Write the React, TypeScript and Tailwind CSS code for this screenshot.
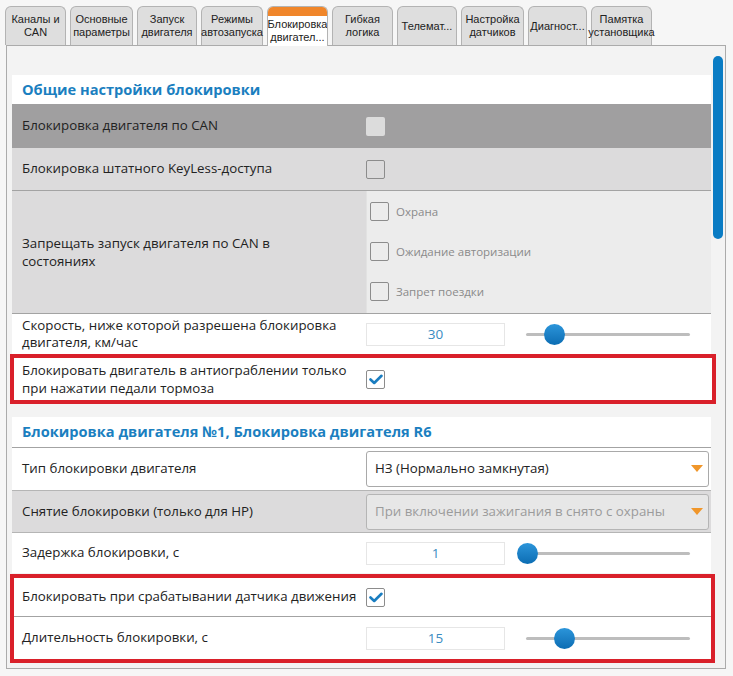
import React from "react";

const tabs: { label: string[]; w: number; active?: boolean }[] = [
  { label: ["Каналы и", "CAN"], w: 61 },
  { label: ["Основные", "параметры"], w: 63 },
  { label: ["Запуск", "двигателя"], w: 60 },
  { label: ["Режимы", "автозапуска"], w: 62 },
  { label: ["Блокировка", "двигател..."], w: 61, active: true },
  { label: ["Гибкая", "логика"], w: 61 },
  { label: ["Телемат..."], w: 60 },
  { label: ["Настройка", "датчиков"], w: 63 },
  { label: ["Диагност..."], w: 59 },
  { label: ["Памятка", "установщика"], w: 61 },
];

function Check({ checked, filled }: { checked?: boolean; filled?: boolean }) {
  if (filled) {
    return <div className="w-[19px] h-[19px] rounded-[2px] bg-[#dcdcdc]" />;
  }
  return (
    <div className="w-[19px] h-[19px] rounded-[2px] border border-[#8c8c8c] bg-transparent flex items-center justify-center">
      {checked && (
        <svg width="14" height="11" viewBox="0 0 14 11">
          <path d="M1.5 5.5 L5.2 9 L12.5 1.8" fill="none" stroke="#1a7dc0" strokeWidth="2.6" strokeLinecap="round" strokeLinejoin="round" />
        </svg>
      )}
    </div>
  );
}

function NumInput({ value }: { value: string }) {
  return (
    <div className="w-[139px] h-[23px] border border-[#e6e6e6] bg-white flex items-center justify-center text-[13.5px] text-[#3a8cc2]">
      {value}
    </div>
  );
}

function Slider({ pos }: { pos: number }) {
  return (
    <div className="relative ml-[21px] w-[164px] h-[22px] flex items-center">
      <div className="w-full h-[3px] rounded-full bg-[#bdbdbd]" />
      <div
        className="absolute top-[1px] w-[21px] h-[21px] rounded-full bg-gradient-to-b from-[#2b95da] to-[#0b6db3]"
        style={{ left: pos - 10 }}
      />
    </div>
  );
}

function Arrow() {
  return (
    <svg width="12" height="8" viewBox="0 0 12 8" className="mr-[5px]">
      <polygon points="0,0 12,0 6,7" fill="#f0962a" />
    </svg>
  );
}

export default function App() {
  return (
    <div
      className="w-[733px] h-[676px] bg-[#f6f6f6] overflow-hidden text-[#222]"
      style={{ fontFamily: '"Open Sans", "Noto Sans", sans-serif' }}
    >
      {/* Tabs */}
      <div
        className="flex items-end gap-[4px] pl-[5px] pt-[5px] h-[45px] relative z-10"
        style={{ fontFamily: '"Liberation Sans", Arial, sans-serif' }}
      >
        {tabs.map((t, i) =>
          t.active ? (
            <div
              key={i}
              className="h-[40px] -mb-px rounded-t-[6px] border border-b-0 border-[#b3b3b3] bg-white flex flex-col overflow-hidden"
              style={{ width: t.w }}
            >
              <div className="h-[9px] bg-[#f0862a] shrink-0" />
              <div className="flex-1 flex flex-col items-center justify-center text-[11px] leading-[13px] text-[#222]">
                {t.label.map((l, j) => (
                  <span key={j}>{l}</span>
                ))}
              </div>
            </div>
          ) : (
            <div
              key={i}
              className="h-[39px] rounded-t-[6px] border border-b-0 border-[#b3b3b3] bg-[#dedede] flex flex-col items-center justify-center text-[11px] leading-[13px] text-[#222]"
              style={{ width: t.w }}
            >
              {t.label.map((l, j) => (
                <span key={j}>{l}</span>
              ))}
            </div>
          )
        )}
      </div>

      {/* Panel */}
      <div className="ml-[6px] w-[720px] h-[624px] border border-[#ababab] bg-[#f3f3f3] flex">
        <div className="ml-[5px] w-[699px] pt-[29px] flex flex-col">
          {/* Section 1 */}
          <div className="h-[29px] bg-white flex items-center pl-[10px] text-[14.6px] font-bold text-[#1b7fc0]">
            Общие настройки блокировки
          </div>
          <div className="h-[44px] bg-[#a09fa0] flex items-center">
            <div className="w-[354px] pl-[10px] text-[13.3px]">Блокировка двигателя по CAN</div>
            <Check filled />
          </div>
          <div className="h-[43px] bg-[#dcdbdc] border-b border-[#a3a3a3] flex items-center">
            <div className="w-[354px] pl-[10px] text-[13.3px]">Блокировка штатного KeyLess-доступа</div>
            <Check />
          </div>
          <div className="h-[123px] bg-[#dcdbdc] border-b border-[#a3a3a3] flex">
            <div className="w-[354px] pl-[10px] pr-[60px] flex items-center text-[13.3px] leading-[18px]">
              Запрещать запуск двигателя по CAN в состояниях
            </div>
            <div className="flex-1 bg-[#ececec] border-l border-[#e2e2e2] flex flex-col pt-[11px] pl-[3px] gap-[21px]">
              {["Охрана", "Ожидание авторизации", "Запрет поездки"].map((s) => (
                <div key={s} className="flex items-center gap-[7px] h-[19px]">
                  <Check />
                  <span className="text-[11.5px] text-[#8a8a8a]">{s}</span>
                </div>
              ))}
            </div>
          </div>
          <div className="h-[40px] bg-white flex items-center">
            <div className="w-[354px] pl-[10px] pr-[10px] text-[13.3px] leading-[17px]">
              Скорость, ниже которой разрешена блокировка двигателя, км/час
            </div>
            <NumInput value="30" />
            <Slider pos={28} />
          </div>
          <div className="h-[50px] -ml-[2px] -mr-[5px] border-[4px] border-[#d9202a] bg-white flex items-center">
            <div className="w-[352px] pl-[8px] pr-[10px] text-[13.3px] leading-[18px]">
              Блокировать двигатель в антиограблении только при нажатии педали тормоза
            </div>
            <Check checked />
          </div>

          {/* Section 2 */}
          <div className="mt-[13px] h-[31px] bg-white border-b border-[#a3a3a3] flex items-center pl-[10px] text-[14.6px] font-bold text-[#1b7fc0]">
            Блокировка двигателя №1, Блокировка двигателя R6
          </div>
          <div className="h-[43px] bg-white border-b border-[#b5b5b5] flex items-center">
            <div className="w-[354px] pl-[10px] text-[13.3px]">Тип блокировки двигателя</div>
            <div className="w-[343px] h-[36px] rounded-[3px] border border-[#a9a9a9] bg-white flex items-center justify-between pl-[8px]">
              <span className="text-[13.3px] text-[#222]">НЗ (Нормально замкнутая)</span>
              <Arrow />
            </div>
          </div>
          <div className="h-[42px] bg-[#dcdbdc] border-b border-[#b5b5b5] flex items-center">
            <div className="w-[354px] pl-[10px] text-[13.3px]">Снятие блокировки (только для НР)</div>
            <div className="w-[343px] h-[36px] rounded-[3px] border border-[#b5b5b5] bg-[#e7e7e7] flex items-center justify-between pl-[8px]">
              <span className="text-[13.3px] text-[#9b9b9b]">При включении зажигания в снято с охраны</span>
              <Arrow />
            </div>
          </div>
          <div className="h-[40px] bg-white flex items-center">
            <div className="w-[354px] pl-[10px] text-[13.3px]">Задержка блокировки, с</div>
            <NumInput value="1" />
            <Slider pos={1} />
          </div>
          <div className="mt-[1px] -ml-[2px] -mr-[4px] border-[4px] border-[#d9202a] bg-white flex flex-col">
            <div className="h-[39px] border-b border-[#a3a3a3] flex items-center">
              <div className="w-[352px] pl-[8px] text-[13.3px]">Блокировать при срабатывании датчика движения</div>
              <Check checked />
            </div>
            <div className="h-[42px] flex items-center">
              <div className="w-[352px] pl-[8px] text-[13.3px]">Длительность блокировки, с</div>
              <NumInput value="15" />
              <Slider pos={38} />
            </div>
          </div>
        </div>
        {/* Scrollbar */}
        <div className="ml-[2px] w-[10px] pt-[10px]">
          <div className="h-[183px] w-[10px] rounded-full bg-[#0a7cc4]" />
        </div>
      </div>
    </div>
  );
}
